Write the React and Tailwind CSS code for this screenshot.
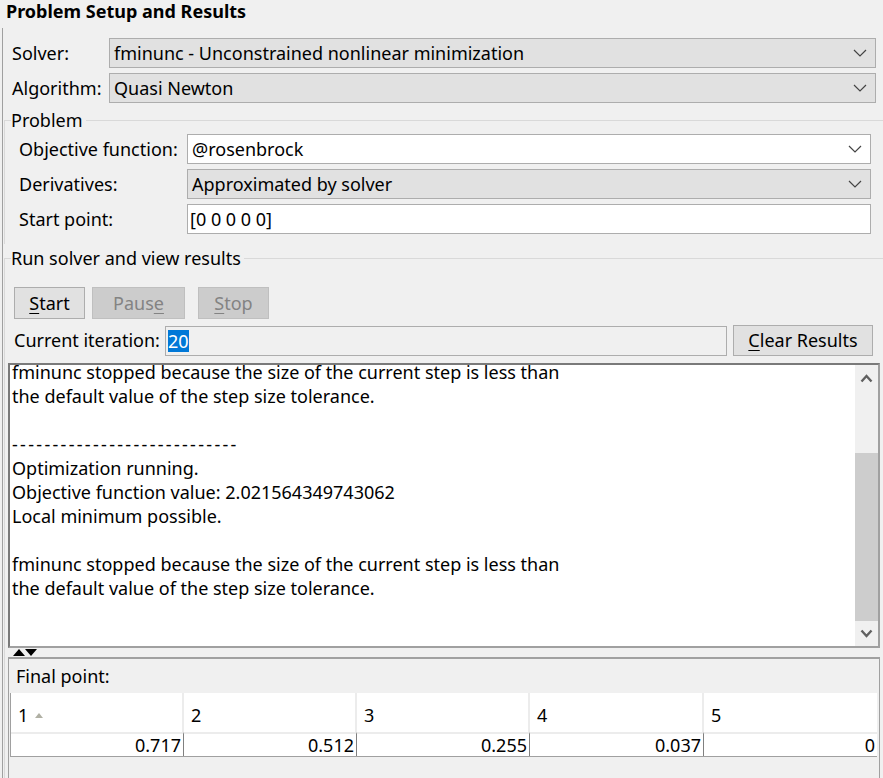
const Chevron = () => (
  <svg width="14" height="8" viewBox="0 0 14 8" className="shrink-0">
    <polyline points="1,1 7,7 13,1" fill="none" stroke="#444" strokeWidth="1.2" />
  </svg>
);

const Select = ({ value, gray = true }) => (
  <div
    className={`flex h-[30px] flex-1 items-center justify-between border border-[#adadad] pl-[4px] pr-[8px] ${
      gray ? "bg-[#e1e1e1]" : "bg-white"
    }`}
  >
    <span>{value}</span>
    <Chevron />
  </div>
);

const Legend = ({ children }) => (
  <div className="-mt-[13px] ml-[6px] w-fit bg-[#f0f0f0] pr-[3px] leading-[24px]">{children}</div>
);

const log = [
  "fminunc stopped because the size of the current step is less than",
  "the default value of the step size tolerance.",
  "",
  "----------------------------",
  "Optimization running.",
  "Objective function value: 2.021564349743062",
  "Local minimum possible.",
  "",
  "fminunc stopped because the size of the current step is less than",
  "the default value of the step size tolerance.",
  "",
];

const finalPoint = ["0.717", "0.512", "0.255", "0.037", "0"];

export default function App() {
  return (
    <div
      className="h-[778px] w-[883px] overflow-hidden bg-[#f0f0f0] text-[18px] text-black"
      style={{ fontFamily: '"Noto Sans", "Open Sans", sans-serif' }}
    >
      {/* Header */}
      <div className="h-[28px] pl-[6px] text-[18px] font-bold leading-[22px]">Problem Setup and Results</div>

      <div className="ml-[2px] h-[750px] border-l border-[#a0a0a0]">
        {/* Solver / Algorithm */}
        <div className="flex flex-col gap-[5px] pl-[9px] pr-[7px] pt-[10px]">
          <div className="flex items-center">
            <span className="w-[97px] shrink-0">Solver:</span>
            <Select value="fminunc - Unconstrained nonlinear minimization" />
          </div>
          <div className="flex items-center">
            <span className="w-[97px] shrink-0">Algorithm:</span>
            <Select value="Quasi Newton" />
          </div>
        </div>

        {/* Problem */}
        <div className="ml-[1px] mt-[17px] h-[124px] border-l border-t border-[#d9d9d9]">
          <Legend>Problem</Legend>
          <div className="flex flex-col gap-[5px] pl-[14px] pr-[12px] pt-[2px]">
            <div className="flex items-center">
              <span className="w-[168px] shrink-0">Objective function:</span>
              <Select value="@rosenbrock" gray={false} />
            </div>
            <div className="flex items-center">
              <span className="w-[168px] shrink-0">Derivatives:</span>
              <Select value="Approximated by solver" />
            </div>
            <div className="flex items-center">
              <span className="w-[168px] shrink-0">Start point:</span>
              <div className="flex h-[30px] flex-1 items-center border border-[#adadad] bg-white pl-[2px]">[0 0 0 0 0]</div>
            </div>
          </div>
        </div>

        {/* Run solver */}
        <div className="ml-[1px] mt-[14px] border-l border-t border-[#d9d9d9]">
          <Legend>Run solver and view results</Legend>
          <div className="flex gap-[7px] pl-[9px] pt-[17px]">
            <button className="h-[32px] w-[71px] border border-[#adadad] bg-[#e1e1e1]">
              <span className="underline underline-offset-[3px]">S</span>tart
            </button>
            <button className="h-[32px] w-[93px] border border-[#bfbfbf] bg-[#cccccc] text-[#838383]">
              Paus<span className="underline underline-offset-[3px]">e</span>
            </button>
            <button className="ml-[6px] h-[32px] w-[71px] border border-[#bfbfbf] bg-[#cccccc] text-[#838383]">
              <span className="underline underline-offset-[3px]">S</span>top
            </button>
          </div>
          <div className="mt-[6px] flex items-center pl-[9px] pr-[10px]">
            <span className="w-[151px] shrink-0">Current iteration:</span>
            <div className="flex h-[30px] flex-1 items-center border border-[#adadad] pl-[2px]">
              <span className="bg-[#0078d7] leading-[22px] text-white">20</span>
            </div>
            <button className="ml-[6px] h-[31px] w-[140px] border border-[#adadad] bg-[#e1e1e1]">
              <span className="underline underline-offset-[3px]">C</span>lear Results
            </button>
          </div>

          {/* Log */}
          <div className="ml-[3px] mr-[3px] mt-[7px] flex h-[285px] border-2 border-[#7a7a7a] border-r-[#a0a0a0] border-b-[#a0a0a0] bg-white">
            <div className="flex-1 overflow-hidden pl-[2px]">
              <div className="-mt-[5px] leading-[24px]">
                {log.map((l, i) => (
                  <div key={i} className={`h-[24px] whitespace-pre ${l.startsWith("-") ? "tracking-[2.3px]" : ""}`}>
                    {l}
                  </div>
                ))}
              </div>
            </div>
            <div className="flex w-[23px] flex-col bg-[#f0f0f0]">
              <div className="flex h-[26px] items-center justify-center">
                <svg width="13" height="9" viewBox="0 0 13 9">
                  <polyline points="1.5,7.5 6.5,2 11.5,7.5" fill="none" stroke="#606060" strokeWidth="2.4" />
                </svg>
              </div>
              <div className="h-[62px]" />
              <div className="h-[168px] bg-[#cdcdcd]" />
              <div className="flex flex-1 items-center justify-center">
                <svg width="13" height="9" viewBox="0 0 13 9">
                  <polyline points="1.5,1.5 6.5,7 11.5,1.5" fill="none" stroke="#606060" strokeWidth="2.4" />
                </svg>
              </div>
            </div>
          </div>

          {/* Splitter */}
          <div className="flex h-[9px] items-center pl-[8px]">
            <svg width="24" height="7" viewBox="0 0 24 7">
              <polygon points="0,7 6,0 12,7" fill="#000" />
              <polygon points="12,0 24,0 18,7" fill="#000" />
            </svg>
          </div>

          {/* Final point */}
          <div className="ml-[3px] mr-[3px] h-[130px] border-l border-r border-t-2 border-[#a0a0a0]">
            <div className="h-[34px] pl-[7px] pt-[5px] leading-[24px]">Final point:</div>
            <div className="ml-[1px] mr-[2px] grid grid-cols-[173px_173px_173px_174px_173px] border-b border-l border-[#a0a0a0] bg-white">
              {[1, 2, 3, 4, 5].map((n, i) => (
                <div
                  key={n}
                  className={`flex h-[39px] items-center pl-[7px] pt-[6px] ${i < 4 ? "border-r-2 border-[#ececec]" : ""}`}
                >
                  {n}
                  {i === 0 && (
                    <svg width="8" height="5" viewBox="0 0 8 5" className="ml-[7px]">
                      <polygon points="0,5 4,0 8,5" fill="#b0b0a4" />
                    </svg>
                  )}
                </div>
              ))}
              {finalPoint.map((v, i) => (
                <div
                  key={i}
                  className={`h-[24px] border-t-2 border-[#ececec] pr-[2px] text-right leading-[22px] ${
                    i < 4 ? "border-r border-r-[#808080]" : ""
                  }`}
                >
                  {v}
                </div>
              ))}
            </div>
          </div>
        </div>
      </div>
    </div>
  );
}
